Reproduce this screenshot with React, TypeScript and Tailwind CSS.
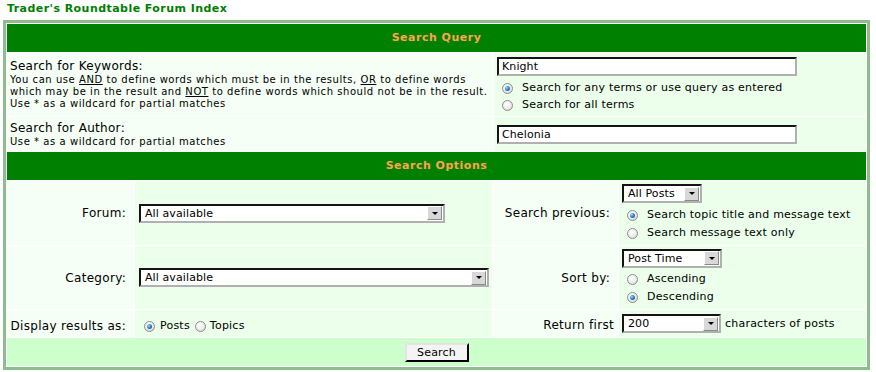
import React from "react";

const Radio = ({ checked }: { checked?: boolean }) => (
  <span className="relative inline-block h-[11px] w-[11px] shrink-0 rounded-full border border-[#8c8c8c] bg-[radial-gradient(circle_at_40%_35%,#ffffff_0%,#ececec_55%,#c4c4c4_100%)]">
    {checked && (
      <span className="absolute left-[2px] top-[2px] h-[5px] w-[5px] rounded-full bg-[radial-gradient(circle_at_35%_35%,#9adcff_0%,#2a7fc4_50%,#0b3f78_100%)]" />
    )}
  </span>
);

const DropBtn = () => (
  <span className="ml-auto mr-px flex h-[14px] w-[15px] items-center justify-center border border-b-[#8a8a8a] border-l-white border-r-[#8a8a8a] border-t-white bg-[#d8d8d8]">
    <span className="h-0 w-0 border-l-[3px] border-r-[3px] border-t-[3px] border-l-transparent border-r-transparent border-t-black" />
  </span>
);

const Select = ({ className, text }: { className: string; text: string }) => (
  <div
    className={
      "flex h-[19px] items-center border-2 border-b-[#b0b0b0] border-l-[#141414] border-r-[#b0b0b0] border-t-[#141414] bg-white pl-[4px] text-[11px] leading-[13px] tracking-[0.1px] text-black " +
      className
    }
  >
    <span>{text}</span>
    <DropBtn />
  </div>
);

const TextInput = ({ value }: { value: string }) => (
  <input
    readOnly
    value={value}
    className="block h-[19px] w-[300px] border-2 border-b-[#b0b0b0] border-l-[#141414] border-r-[#b0b0b0] border-t-[#141414] bg-white pl-[3px] text-[11px] leading-[13px] tracking-[0.1px] text-black outline-none"
  />
);

const RadioLine = ({
  checked,
  children,
  className,
}: {
  checked?: boolean;
  children: React.ReactNode;
  className: string;
}) => (
  <div className={"flex items-center text-[11px] tracking-[0.22px] " + className}>
    <span className="ml-[5px] mr-[9px] flex">
      <Radio checked={checked} />
    </span>
    <span>{children}</span>
  </div>
);

export default function App() {
  return (
    <div className="h-[372px] w-[876px] overflow-hidden bg-white font-['DejaVu_Sans',Verdana,sans-serif] text-black">
      <div className="h-[20px] pl-[7px] pt-[2px] text-[11px] font-bold leading-[13px] tracking-[0.45px] text-[#007f00]">
        Trader's Roundtable Forum Index
      </div>
      <div className="ml-[3px] flex w-[867px] flex-col gap-px border-[3px] border-[#8fbc8f] bg-white p-px">
        <div className="flex h-[28px] items-center justify-center bg-[#008000] text-[11px] font-bold tracking-[0.5px] text-[#ffa34f]">
          Search Query
        </div>

        <div className="grid grid-cols-[486px_372px] gap-px">
          <div className="flex h-[63px] flex-col justify-center bg-[#f5fff5] pl-[3px]">
            <div className="text-[12px] leading-[15px] tracking-[0.3px]">Search for Keywords:</div>
            <div className="text-[10px] leading-[12px] tracking-[0.55px]">
              You can use <u>AND</u> to define words which must be in the results, <u>OR</u> to define words
              <br />
              which may be in the result and <u>NOT</u> to define words which should not be in the result.
              <br />
              Use * as a wildcard for partial matches
            </div>
          </div>
          <div className="flex flex-col bg-[#ebffeb] pl-[3px] pt-[4px]">
            <TextInput value="Knight" />
            <div className="mt-[4px]">
              <RadioLine checked className="h-[17px]">
                Search for any terms or use query as entered
              </RadioLine>
              <RadioLine className="h-[17px]">Search for all terms</RadioLine>
            </div>
          </div>
        </div>

        <div className="grid grid-cols-[486px_372px] gap-px">
          <div className="flex h-[34px] flex-col justify-center bg-[#f5fff5] pl-[3px]">
            <div className="text-[12px] leading-[15px] tracking-[0.3px]">Search for Author:</div>
            <div className="text-[10px] leading-[12px] tracking-[0.55px]">Use * as a wildcard for partial matches</div>
          </div>
          <div className="flex flex-col justify-center bg-[#ebffeb] pl-[3px]">
            <TextInput value="Chelonia" />
          </div>
        </div>

        <div className="flex h-[28px] items-center justify-center bg-[#008000] text-[11px] font-bold tracking-[0.5px] text-[#ffa34f]">
          Search Options
        </div>

        <div className="grid grid-cols-[127px_357px_125px_247px] grid-rows-[64px_63px_27px] gap-px text-[12px] tracking-[0.3px]">
          <div className="flex items-center justify-end bg-[#f5fff5] pr-[8px]">Forum:</div>
          <div className="flex items-center bg-[#ebffeb] pl-[4px]">
            <Select className="w-[306px]" text="All available" />
          </div>
          <div className="flex items-center justify-end bg-[#f5fff5] pr-[8px]">Search previous:</div>
          <div className="flex flex-col justify-center bg-[#ebffeb] pl-[3px]">
            <Select className="w-[80px]" text="All Posts" />
            <div className="pt-[3px]">
              <RadioLine checked className="h-[18px]">
                Search topic title and message text
              </RadioLine>
              <RadioLine className="h-[18px]">Search message text only</RadioLine>
            </div>
          </div>

          <div className="flex items-center justify-end bg-[#f5fff5] pr-[8px]">Category:</div>
          <div className="flex items-center bg-[#ebffeb] pl-[4px]">
            <Select className="w-[350px]" text="All available" />
          </div>
          <div className="flex items-center justify-end bg-[#f5fff5] pr-[8px]">Sort by:</div>
          <div className="flex flex-col justify-center bg-[#ebffeb] pl-[3px]">
            <Select className="w-[100px]" text="Post Time" />
            <div className="pt-[3px]">
              <RadioLine className="h-[18px]">Ascending</RadioLine>
              <RadioLine checked className="h-[18px]">
                Descending
              </RadioLine>
            </div>
          </div>

          <div className="flex items-center justify-end bg-[#f5fff5] pr-[8px] pt-[4px]">Display results as:</div>
          <div className="flex items-center bg-[#ebffeb] pl-[4px] pt-[5px] text-[11px] tracking-[0.22px]">
            <span className="ml-[5px] mr-[5px] flex">
              <Radio checked />
            </span>
            <span>Posts</span>
            <span className="ml-[5px] mr-[4px] flex">
              <Radio />
            </span>
            <span>Topics</span>
          </div>
          <div className="flex items-center justify-end bg-[#f5fff5] pr-[4px] pt-[3px]">Return first</div>
          <div className="flex items-center bg-[#ebffeb] pl-[3px] text-[11px] tracking-[0.22px]">
            <Select className="w-[99px]" text="200" />
            <span className="ml-[4px] pt-[2px]">characters of posts</span>
          </div>
        </div>

        <div className="flex h-[28px] items-center justify-center bg-[#ccffcc]">
          <button className="h-[19px] w-[64px] border-2 border-b-black border-l-[#e4e4e4] border-r-black border-t-[#e4e4e4] bg-[#f4f4f4] text-[11px] leading-[13px] tracking-[0.2px] text-black">
            Search
          </button>
        </div>
      </div>
    </div>
  );
}
